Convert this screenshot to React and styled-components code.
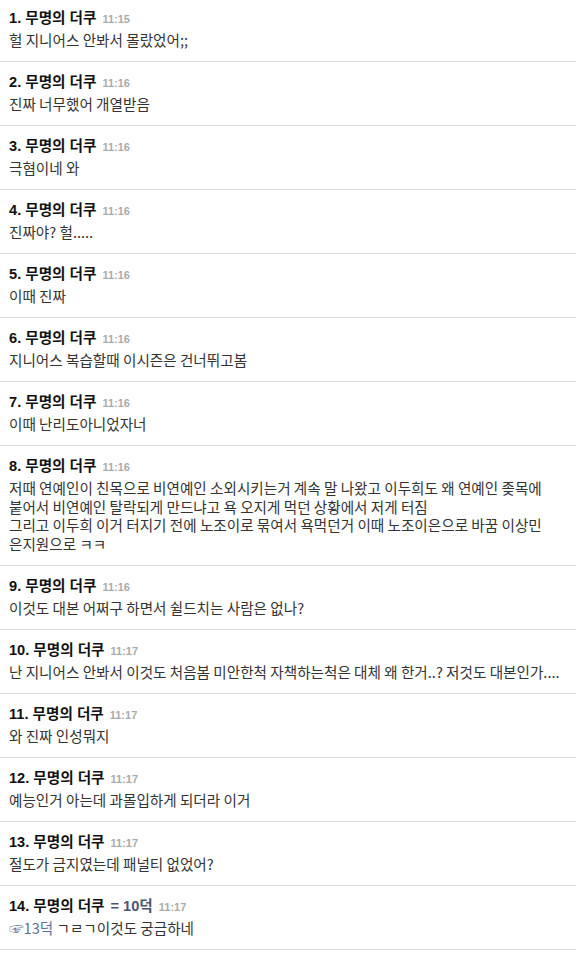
import * as React from 'react';
import styled, { createGlobalStyle } from 'styled-components';

const comments = [
  { no: 1, time: '11:15', text: '헐 지니어스 안봐서 몰랐었어;;' },
  { no: 2, time: '11:16', text: '진짜 너무했어 개열받음' },
  { no: 3, time: '11:16', text: '극혐이네 와' },
  { no: 4, time: '11:16', text: '진짜야? 헐.....' },
  { no: 5, time: '11:16', text: '이때 진짜' },
  { no: 6, time: '11:16', text: '지니어스 복습할때 이시즌은 건너뛰고봄' },
  { no: 7, time: '11:16', text: '이때 난리도아니었자너' },
  {
    no: 8,
    time: '11:16',
    text:
      '저때 연예인이 친목으로 비연예인 소외시키는거 계속 말 나왔고 이두희도 왜 연예인 좆목에 붙어서 비연예인 탈락되게 만드냐고 욕 오지게 먹던 상황에서 저게 터짐\n그리고 이두희 이거 터지기 전에 노조이로 묶여서 욕먹던거 이때 노조이은으로 바꿈 이상민 은지원으로 ㅋㅋ',
  },
  { no: 9, time: '11:16', text: '이것도 대본 어쩌구 하면서 쉴드치는 사람은 없나?' },
  {
    no: 10,
    time: '11:17',
    text: '난 지니어스 안봐서 이것도 처음봄 미안한척 자책하는척은 대체 왜 한거..? 저것도 대본인가....',
  },
  { no: 11, time: '11:17', text: '와 진짜 인성뭐지' },
  { no: 12, time: '11:17', text: '예능인거 아는데 과몰입하게 되더라 이거' },
  { no: 13, time: '11:17', text: '절도가 금지였는데 패널티 없었어?' },
  { no: 14, time: '11:17', tag: '= 10덕', reply: '☞13덕', text: ' ㄱㄹㄱ이것도 궁금하네' },
];

export default function App() {
  return (
    <>
      <Global />
      <List>
        {comments.map((c) => (
          <Item key={c.no}>
            <Head>
              <Name>{c.no}. 무명의 더쿠</Name>
              {c.tag && <Tag>{c.tag}</Tag>}
              <Time>{c.time}</Time>
            </Head>
            <Body>
              {c.reply && <Reply>{c.reply}</Reply>}
              {c.text}
            </Body>
          </Item>
        ))}
      </List>
    </>
  );
}

const Global = createGlobalStyle`
  body {
    margin: 0;
    background: #fff;
    font-family: "Noto Sans CJK KR", "Liberation Sans", sans-serif;
  }
`;

const List = styled.ul`
  list-style: none;
  margin: 0;
  padding: 0;
  width: 576px;
`;

const Item = styled.li`
  padding: 10px 2px 11.35px 9px;
  border-bottom: 1px solid #ddd;

  &:first-child {
    padding-top: 8px;
  }
`;

const Head = styled.div`
  display: flex;
  align-items: center;
  gap: 6px;
  height: 20px;
  margin-bottom: 3px;
  font-family: "Liberation Sans", "Noto Sans CJK KR", sans-serif;
`;

const Name = styled.span`
  font-size: 14.6px;
  font-weight: bold;
  line-height: 20px;
  color: #111;
`;

const Tag = styled.span`
  font-size: 14.6px;
  font-weight: bold;
  line-height: 20px;
  color: #4a5573;
`;

const Time = styled.span`
  font-size: 11px;
  font-weight: bold;
  line-height: 20px;
  padding-top: 2px;
  color: #aaa;
  font-family: "Liberation Sans", sans-serif;
`;

const Body = styled.div`
  font-size: 14.6px;
  line-height: 18.67px;
  color: #333;
  white-space: pre-wrap;
  word-break: keep-all;
`;

const Reply = styled.span`
  color: #5a7099;
`;
